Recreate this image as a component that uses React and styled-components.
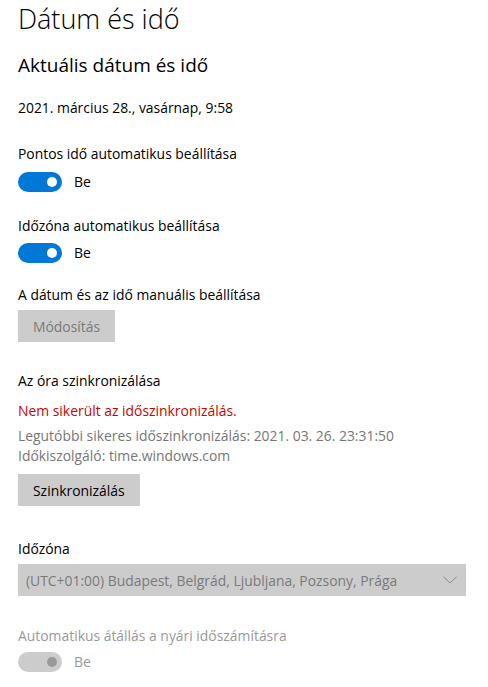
import styled, { createGlobalStyle } from 'styled-components';

const GlobalStyle = createGlobalStyle`
  html, body {
    margin: 0;
    padding: 0;
    background: #ffffff;
  }
  body {
    font-family: 'Open Sans', 'Noto Sans', sans-serif;
    color: #000000;
    -webkit-font-smoothing: antialiased;
  }
`;

const Page = styled.div`
  width: 488px;
  height: 687px;
  overflow: hidden;
  box-sizing: border-box;
  padding: 0 18px;
  display: flex;
  flex-direction: column;
  align-items: flex-start;
`;

const Title = styled.h1`
  margin: 0;
  font-size: 27px;
  font-weight: 300;
  line-height: 38px;
`;

const Subtitle = styled.h2`
  margin: 14px 0 0;
  font-size: 19px;
  font-weight: 400;
  line-height: 26px;
`;

const Text = styled.div`
  font-size: 13.9px;
  line-height: 20px;
  margin-top: ${(p) => p.$mt || 0}px;
  color: ${(p) => p.$color || '#000000'};
`;

const ToggleRow = styled.div`
  display: flex;
  align-items: center;
  gap: 12px;
  margin-top: ${(p) => p.$mt || 0}px;
`;

const Track = styled.div`
  width: 44px;
  height: 20px;
  border-radius: 10px;
  box-sizing: border-box;
  background: ${(p) => (p.$disabled ? '#cccccc' : '#0078d7')};
  display: flex;
  align-items: center;
  justify-content: flex-end;
  padding-right: 5px;
`;

const Knob = styled.div`
  width: 10px;
  height: 10px;
  border-radius: 50%;
  background: ${(p) => (p.$disabled ? '#999999' : '#ffffff')};
`;

const ToggleLabel = styled.span`
  font-size: 14px;
  line-height: 20px;
  color: ${(p) => (p.$disabled ? '#999999' : '#000000')};
`;

const Button = styled.button`
  margin-top: ${(p) => p.$mt || 0}px;
  height: 32px;
  padding: 0 15px;
  border: none;
  background: #cccccc;
  font-family: inherit;
  font-size: 13.9px;
  color: ${(p) => (p.disabled ? '#7a7a7a' : '#000000')};
`;

const Select = styled.div`
  margin-top: ${(p) => p.$mt || 0}px;
  width: 448px;
  height: 32px;
  box-sizing: border-box;
  background: #cccccc;
  display: flex;
  align-items: center;
  justify-content: space-between;
  padding: 0 9px 0 8px;
  font-size: 13.9px;
  color: #7a7a7a;
`;

function Toggle({ disabled, mt }) {
  return (
    <ToggleRow $mt={mt}>
      <Track $disabled={disabled}>
        <Knob $disabled={disabled} />
      </Track>
      <ToggleLabel $disabled={disabled}>Be</ToggleLabel>
    </ToggleRow>
  );
}

export default function App() {
  return (
    <>
      <GlobalStyle />
      <Page>
        <Title>Dátum és idő</Title>
        <Subtitle>Aktuális dátum és idő</Subtitle>
        <Text $mt={20}>2021. március 28., vasárnap, 9:58</Text>

        <Text $mt={26}>Pontos idő automatikus beállítása</Text>
        <Toggle mt={8} />

        <Text $mt={24}>Időzóna automatikus beállítása</Text>
        <Toggle mt={7} />

        <Text $mt={22}>A dátum és az idő manuális beállítása</Text>
        <Button $mt={5} disabled>Módosítás</Button>

        <Text $mt={29}>Az óra szinkronizálása</Text>
        <Text $mt={10} $color="#c50500">Nem sikerült az időszinkronizálás.</Text>
        <Text $mt={5} $color="#767676">Legutóbbi sikeres időszinkronizálás: 2021. 03. 26. 23:31:50</Text>
        <Text $color="#767676">Időkiszolgáló: time.windows.com</Text>
        <Button $mt={8}>Szinkronizálás</Button>

        <Text $mt={33}>Időzóna</Text>
        <Select $mt={5}>
          <span>(UTC+01:00) Budapest, Belgrád, Ljubljana, Pozsony, Prága</span>
          <svg width="14" height="8" viewBox="0 0 14 8">
            <path d="M0.5 0.8 L7 7 L13.5 0.8" fill="none" stroke="#8a8a8a" strokeWidth="1" />
          </svg>
        </Select>

        <Text $mt={30} $color="#999999">Automatikus átállás a nyári időszámításra</Text>
        <Toggle mt={6} disabled />
      </Page>
    </>
  );
}
